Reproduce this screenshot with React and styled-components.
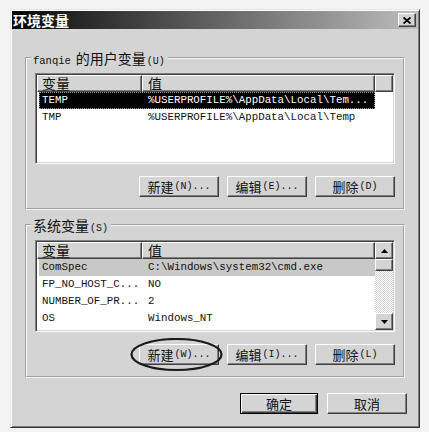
import React from 'react';
import styled, { createGlobalStyle, css } from 'styled-components';

const FACE = '#d4d4d4';
const CJK = '"Noto Sans CJK SC", "Noto Sans", sans-serif';
const MONO = '"Liberation Mono", "DejaVu Sans Mono", monospace';

const USER_VARS = [
  { name: 'TEMP', value: '%USERPROFILE%\\AppData\\Local\\Tem...', state: 'focus' },
  { name: 'TMP', value: '%USERPROFILE%\\AppData\\Local\\Temp' },
];

const SYS_VARS = [
  { name: 'ComSpec', value: 'C:\\Windows\\system32\\cmd.exe', state: 'idle' },
  { name: 'FP_NO_HOST_C...', value: 'NO' },
  { name: 'NUMBER_OF_PR...', value: '2' },
  { name: 'OS', value: 'Windows_NT' },
];

const GlobalStyle = createGlobalStyle`
  html, body { margin: 0; padding: 0; background: #f3f3f3; }
  body { font-family: ${CJK}; color: #111; overflow: hidden; }
  * { box-sizing: border-box; }
`;

const raised = css`
  border: 1px solid;
  border-color: #fff #404040 #404040 #fff;
  box-shadow: inset -1px -1px 0 #808080;
  background: ${FACE};
`;

const Window = styled.div`
  margin: 9px 0 0 10px;
  width: 410px;
  height: 419px;
  padding: 1px;
  background: ${FACE};
  border: 1px solid;
  border-color: #e6e6e6 #303030 #303030 #e6e6e6;
  box-shadow: inset 1px 1px 0 #fff, inset -1px -1px 0 #808080;
  display: flex;
  flex-direction: column;
`;

const TitleBar = styled.div`
  height: 18px;
  padding: 0 2px 0 1px;
  display: flex;
  align-items: center;
  justify-content: space-between;
  background: linear-gradient(90deg, #050505 0%, #1e1e1e 12%, #bdbdbd 100%);
`;

const Title = styled.span`
  color: #fff;
  font-weight: bold;
  font-size: 14px;
  line-height: 18px;
`;

const CloseButton = styled.div`
  ${raised};
  width: 18px;
  height: 14px;
  display: flex;
  align-items: center;
  justify-content: center;
`;

const Content = styled.div`
  flex: 1;
  display: flex;
  flex-direction: column;
  padding: 0 11px 0 13px;
`;

const Group = styled.fieldset`
  margin: ${(p) => p.$top}px 2px 0 0;
  padding: 0;
  min-width: 0;
  border: 2px groove #f6f6f6;
`;

const Legend = styled.legend`
  margin-left: 4px;
  padding: 0 3px 0 2px;
  height: 14px;
  font-size: 14px;
  line-height: 14px;
  color: #111;
`;

const Mono = styled.span`
  font-family: ${MONO};
  font-size: 10.5px;
  margin-right: 5px;
`;

const Key = styled.span`
  font-family: ${MONO};
  font-size: 10px;
  margin-left: 1px;
`;

const GroupBody = styled.div`
  padding: 8px 8px 11px;
  display: flex;
  flex-direction: column;
`;

const List = styled.div`
  height: ${(p) => p.$h}px;
  padding: 1px;
  background: #fff;
  border: 1px solid;
  border-color: #808080 #fff #fff #808080;
  box-shadow: inset 1px 1px 0 #404040, inset -1px -1px 0 ${FACE};
  display: flex;
`;

const Table = styled.div`
  flex: 1;
  min-width: 0;
  display: flex;
  flex-direction: column;
`;

const Header = styled.div`
  display: grid;
  grid-template-columns: 105px 233px 1fr;
  height: 17px;
  flex-shrink: 0;
`;

const HeaderCell = styled.div`
  ${raised};
  display: flex;
  align-items: center;
  font-size: 14px;
  line-height: 15px;
  padding-left: ${(p) => (p.$first ? 4 : 5)}px;
  color: #111;
  white-space: nowrap;
`;

const Row = styled.div`
  display: grid;
  grid-template-columns: 103px 233px;
  margin-left: 2px;
  width: 336px;
  height: 17px;
  flex-shrink: 0;
  font-family: ${MONO};
  font-size: 10.8px;
  line-height: 17px;
  white-space: nowrap;
  color: #111;
  ${(p) =>
    p.$state === 'focus' &&
    css`
      background: #000;
      color: #fff;
      outline: 1px dotted #9a9a9a;
      outline-offset: -1px;
    `}
  ${(p) =>
    p.$state === 'idle' &&
    css`
      background: #c8c8c8;
    `}
`;

const Cell = styled.span`
  overflow: hidden;
  padding-left: ${(p) => (p.$first ? 3 : 6)}px;
`;

const ScrollBar = styled.div`
  width: 18px;
  flex-shrink: 0;
  display: flex;
  flex-direction: column;
`;

const ScrollButton = styled.div`
  ${raised};
  height: 17px;
  flex-shrink: 0;
  display: flex;
  align-items: center;
  justify-content: center;
`;

const Thumb = styled.div`
  ${raised};
  height: 12px;
  flex-shrink: 0;
`;

const Track = styled.div`
  flex: 1;
  background: repeating-conic-gradient(#fff 0 25%, ${FACE} 0 50%) 0 0 / 2px 2px;
`;

const ButtonRow = styled.div`
  margin-top: ${(p) => p.$top}px;
  display: flex;
  justify-content: flex-end;
  gap: ${(p) => p.$gap}px;
`;

const Button = styled.div`
  ${raised};
  width: ${(p) => p.$w || 80}px;
  height: 21px;
  display: flex;
  align-items: center;
  justify-content: center;
  font-size: 13px;
  line-height: 19px;
  color: #111;
  white-space: nowrap;
  ${(p) =>
    p.$default &&
    css`
      border-color: #000;
      box-shadow: inset 1px 1px 0 #fff, inset -1px -1px 0 #404040,
        inset -2px -2px 0 #808080;
    `}
`;

const Circled = styled.div`
  position: relative;
`;

const Ring = styled.svg`
  position: absolute;
  left: -9px;
  top: -6px;
  pointer-events: none;
`;

const Arrow = ({ up }) => (
  <svg width="7" height="4" viewBox="0 0 7 4">
    <polygon points={up ? '3.5,0 7,4 0,4' : '0,0 7,0 3.5,4'} fill="#000" />
  </svg>
);

const VarList = ({ rows, height, scroll }) => (
  <List $h={height}>
    <Table>
      <Header>
        <HeaderCell $first>变量</HeaderCell>
        <HeaderCell>值</HeaderCell>
        {!scroll && <HeaderCell />}
      </Header>
      {rows.map((r) => (
        <Row key={r.name} $state={r.state}>
          <Cell $first>{r.name}</Cell>
          <Cell>{r.value}</Cell>
        </Row>
      ))}
    </Table>
    {scroll && (
      <ScrollBar>
        <ScrollButton>
          <Arrow up />
        </ScrollButton>
        <Thumb />
        <Track />
        <ScrollButton>
          <Arrow />
        </ScrollButton>
      </ScrollBar>
    )}
  </List>
);

export default function App() {
  return (
    <>
      <GlobalStyle />
      <Window>
        <TitleBar>
          <Title>环境变量</Title>
          <CloseButton>
            <svg width="8" height="7" viewBox="0 0 8 7">
              <path d="M0.5 0.5 L7.5 6.5 M7.5 0.5 L0.5 6.5" stroke="#000" strokeWidth="1.8" />
            </svg>
          </CloseButton>
        </TitleBar>
        <Content>
          <Group $top={22}>
            <Legend>
              <Mono>fanqie</Mono>的用户变量<Key>(U)</Key>
            </Legend>
            <GroupBody>
              <VarList rows={USER_VARS} height={91} />
              <ButtonRow $top={12} $gap={8}>
                <Button>新建<Key>(N)...</Key></Button>
                <Button>编辑<Key>(E)...</Key></Button>
                <Button>删除<Key>(D)</Key></Button>
              </ButtonRow>
            </GroupBody>
          </Group>
          <Group $top={8}>
            <Legend>
              系统变量<Key>(S)</Key>
            </Legend>
            <GroupBody>
              <VarList rows={SYS_VARS} height={92} scroll />
              <ButtonRow $top={12} $gap={8}>
                <Circled>
                  <Button>新建<Key>(W)...</Key></Button>
                  <Ring width="94" height="34" viewBox="0 0 94 34">
                    <ellipse cx="46.5" cy="16.5" rx="45" ry="15.5" fill="none" stroke="#1a1a1a" strokeWidth="2.2" />
                  </Ring>
                </Circled>
                <Button>编辑<Key>(I)...</Key></Button>
                <Button>删除<Key>(L)</Key></Button>
              </ButtonRow>
            </GroupBody>
          </Group>
          <ButtonRow $top={15} $gap={9}>
            <Button $default $w={78}>确定</Button>
            <Button>取消</Button>
          </ButtonRow>
        </Content>
      </Window>
    </>
  );
}
